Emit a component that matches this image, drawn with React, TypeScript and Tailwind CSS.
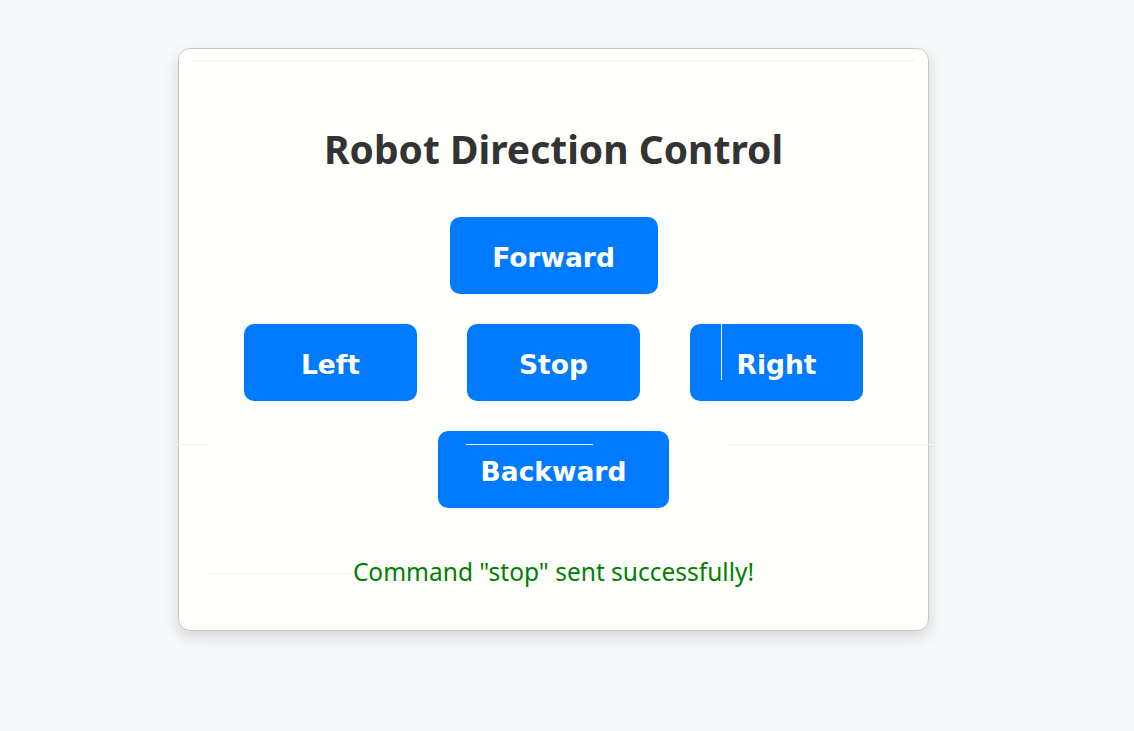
import React, { useState } from 'react';

type Direction = 'forward' | 'left' | 'stop' | 'right' | 'backward';

const btn =
  "h-[77px] pt-[5px] rounded-[10px] bg-[#007bff] text-white text-[26.5px] font-bold font-['DejaVu_Sans',sans-serif] flex items-center justify-center";

export default function App() {
  const [last, setLast] = useState<Direction>('stop');

  const send = (d: Direction) => setLast(d);

  return (
    <div className="min-h-screen bg-[#f7f8fa] pt-[48px] pl-[178px]">
      <div className="relative w-[751px] h-[583px] rounded-[12px] border border-[#c8c8c8] bg-[#fffffc] shadow-[0_6px_16px_rgba(0,0,0,0.14)] flex flex-col items-center">
        {/* faint capture seams */}
        <div className="absolute left-[11px] right-[13px] top-[11px] h-px bg-[#f1f3f7]" />
        <div className="absolute left-[-9px] w-[39px] top-[395px] h-px bg-[#eef0f4]" />
        <div className="absolute left-[549px] right-[-7px] top-[395px] h-px bg-[#f1f3f7]" />
        <div className="absolute left-[29px] w-[143px] top-[524px] h-px bg-[#f1f3f7]" />

        <h1 className="mt-[75px] text-[39px] leading-[50px] font-bold text-[#333333] font-['Noto_Sans','Open_Sans',sans-serif]">
          Robot Direction Control
        </h1>

        <div className="mt-[43px] flex flex-col items-center gap-[30px]">
          <button onClick={() => send('forward')} className={`${btn} w-[208px]`}>
            Forward
          </button>
          <div className="flex gap-[50px]">
            <button onClick={() => send('left')} className={`${btn} w-[173px]`}>
              Left
            </button>
            <button onClick={() => send('stop')} className={`${btn} w-[173px]`}>
              Stop
            </button>
            <button onClick={() => send('right')} className={`${btn} relative w-[173px]`}>
              <span className="absolute left-[31px] top-[-8px] h-[64px] w-px bg-white" />
              Right
            </button>
          </div>
          <button onClick={() => send('backward')} className={`${btn} relative w-[231px]`}>
            <span className="absolute left-[28px] top-[13px] w-[127px] h-px bg-white" />
            Backward
          </button>
        </div>

        <p className="mt-[49px] text-[24.5px] leading-[30px] text-[#008000] font-['Noto_Sans','Open_Sans',sans-serif]">
          Command "{last}" sent successfully!
        </p>
      </div>
    </div>
  );
}
